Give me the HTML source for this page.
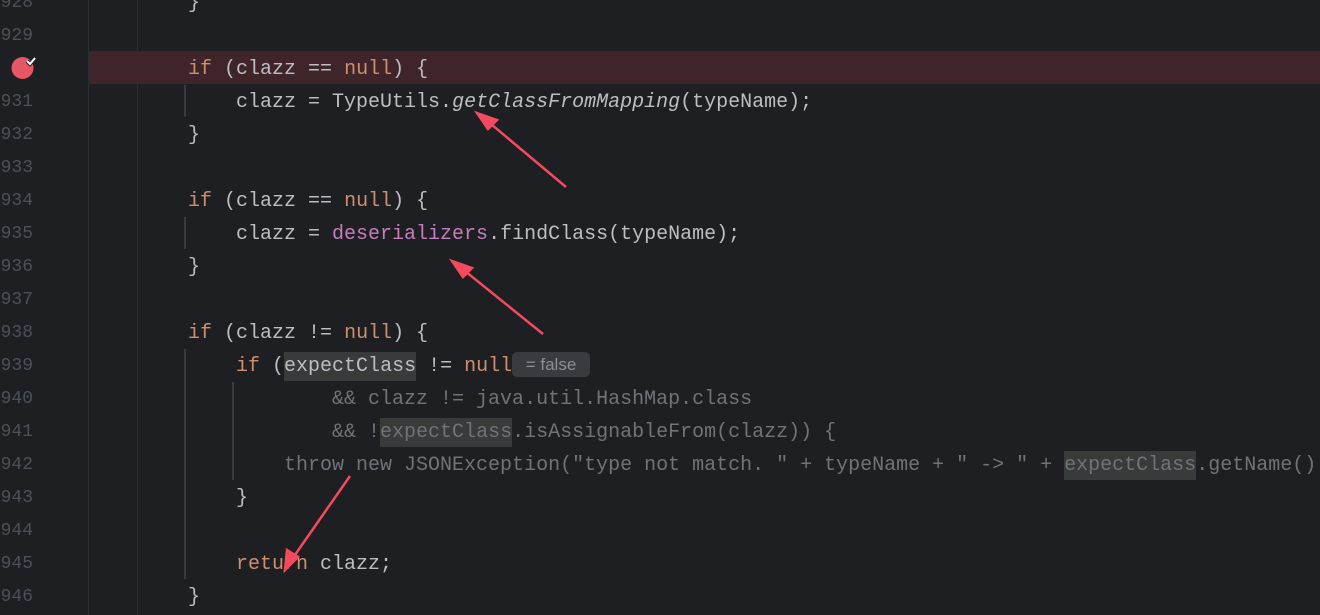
<!DOCTYPE html>
<html><head><meta charset="utf-8"><style>
html,body{margin:0;padding:0;width:1320px;height:615px;overflow:hidden;background:#1e1f22;}
.ln{position:absolute;left:0;width:33px;text-align:right;font:18px/33px "Liberation Mono",monospace;color:#4b5059;margin-top:2px}
.c{position:absolute;left:140px;font:20px/33px "Liberation Mono",monospace;color:#bcbec4;white-space:pre;margin-top:2px}
.k{color:#cf8e6d}.f{color:#c77dbb}.i{font-style:italic}.d{color:#6f737a}
.h{background:#373b39;padding:3px 0}
.g{position:absolute;width:2px;background:#393b40}
</style></head><body>
<div style="position:absolute;left:88px;top:0;width:1px;height:615px;background:#2b2d30"></div>
<div style="position:absolute;left:137px;top:0;width:1px;height:615px;background:#2b2d30"></div>
<div style="position:absolute;left:89px;top:51px;width:1231px;height:33px;background:#3f2529"></div>
<svg style="position:absolute;left:10px;top:54px" width="28" height="28"><circle cx="12.5" cy="14" r="11" fill="#e55765"/><path d="M17 7l3 3 5-6" stroke="#1e1f22" stroke-width="4" fill="none"/><path d="M17 7l3 3 5-6" stroke="#fff" stroke-width="2" fill="none"/></svg>
<div class="g" style="left:184px;top:85px;height:32px"></div>
<div class="g" style="left:184px;top:217px;height:32px"></div>
<div class="g" style="left:184px;top:349px;height:230px"></div>
<div class="g" style="left:232px;top:382px;height:98px"></div>
<div class="ln" style="top:-15px">928</div>
<div class="ln" style="top:18px">929</div>
<div class="ln" style="top:84px">931</div>
<div class="ln" style="top:117px">932</div>
<div class="ln" style="top:150px">933</div>
<div class="ln" style="top:183px">934</div>
<div class="ln" style="top:216px">935</div>
<div class="ln" style="top:249px">936</div>
<div class="ln" style="top:282px">937</div>
<div class="ln" style="top:315px">938</div>
<div class="ln" style="top:348px">939</div>
<div class="ln" style="top:381px">940</div>
<div class="ln" style="top:414px">941</div>
<div class="ln" style="top:447px">942</div>
<div class="ln" style="top:480px">943</div>
<div class="ln" style="top:513px">944</div>
<div class="ln" style="top:546px">945</div>
<div class="ln" style="top:579px">946</div>
<div class="c" style="top:-15px">    }</div>
<div class="c" style="top:51px">    <span class="k">if</span> (clazz == <span class="k">null</span>) {</div>
<div class="c" style="top:84px">        clazz = TypeUtils.<span class="i">getClassFromMapping</span>(typeName);</div>
<div class="c" style="top:117px">    }</div>
<div class="c" style="top:183px">    <span class="k">if</span> (clazz == <span class="k">null</span>) {</div>
<div class="c" style="top:216px">        clazz = <span class="f">deserializers</span>.findClass(typeName);</div>
<div class="c" style="top:249px">    }</div>
<div class="c" style="top:315px">    <span class="k">if</span> (clazz != <span class="k">null</span>) {</div>
<div class="c" style="top:348px">        <span class="k">if</span> (<span class="h">expectClass</span> != <span class="k">null</span></div>
<div style="position:absolute;left:512px;top:352px;width:78px;height:25px;background:#393b40;border-radius:5px;color:#8c8f94;font:17px/25px 'Liberation Sans',sans-serif;text-align:center">= false</div>
<div class="c d" style="top:381px">                &amp;&amp; clazz != java.util.HashMap.class</div>
<div class="c d" style="top:414px">                &amp;&amp; !<span class="h">expectClass</span>.isAssignableFrom(clazz)) {</div>
<div class="c d" style="top:447px">            throw new JSONException("type not match. " + typeName + " -&gt; " + <span class="h">expectClass</span>.getName()</div>
<div class="c" style="top:480px">        }</div>
<div class="c" style="top:546px">        <span class="k">return</span> clazz;</div>
<div class="c" style="top:579px">    }</div>
<svg style="position:absolute;left:0;top:0" width="1320" height="615">
<g stroke="#f5495e" stroke-width="2.5" fill="#f5495e">
<line x1="566" y1="187" x2="485" y2="119"/><polygon points="477,113 497,120 488,129"/>
<line x1="543" y1="334" x2="460" y2="267"/><polygon points="452,261 472,268 463,277"/>
<line x1="350" y1="476" x2="290" y2="562"/><polygon points="285,570 287,550 298,557"/>
</g></svg>
</body></html>
